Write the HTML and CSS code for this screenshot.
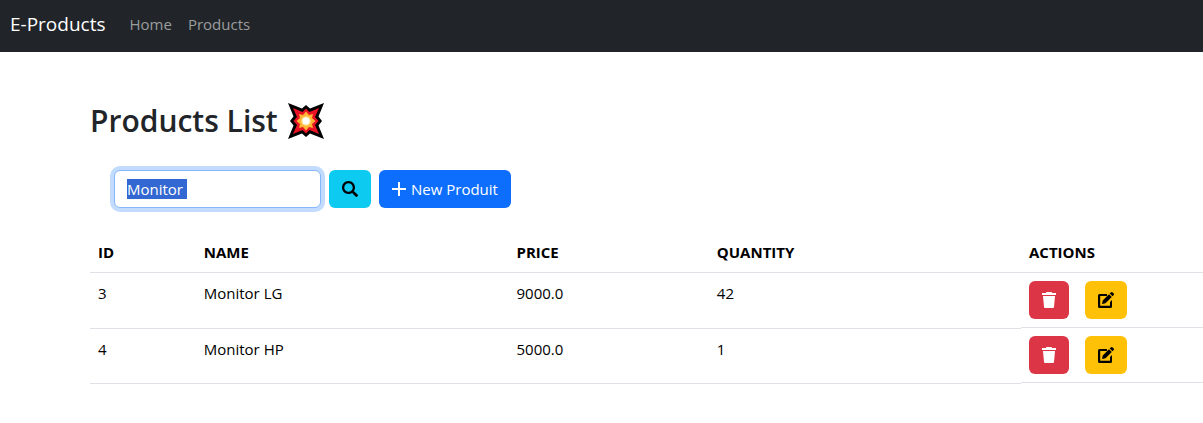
FILE: index.html
```html
<!DOCTYPE html>
<html lang="en">
<head>
<meta charset="utf-8">
<meta name="viewport" content="width=device-width, initial-scale=1">
<title>E-Products</title>
<link rel="stylesheet" href="styles.css">
</head>
<body>
<svg class="sprite" aria-hidden="true">
  <symbol id="trash" viewBox="0 0 14 16"><path d="M4.500 0h5l.6 1H14v2H0V1h3.900zM1 4h12l-1 11q-.1 1-1 1H3q-.9 0-1-1z"/></symbol>
  <symbol id="edit" viewBox="0 0 16 16"><path d="M9 2v2H2.200v9.800h9.800V10l2-2v6.500q0 1.500-1.500 1.500h-11Q0 16 0 14.500v-11Q0 2 1.500 2zM11 2.200 13.800 5 7.500 11.300 4 12l.7-3.500zM11.700 1.500l1-1q1-1 2 0l.8.8q1 1 0 2l-1 1z"/></symbol>
</svg>
<nav class="navbar">
  <a class="brand" href="#">E-Products</a>
  <a class="nav-link" href="#">Home</a>
  <a class="nav-link" href="#">Products</a>
</nav>
<main class="content">
  <h1 class="title">Products List
    <svg class="burst" viewBox="0 0 36 36" role="img" aria-label="Collision">
      <path fill="#000" d="M0 0 14 5.500 18 2 22 5.500 36 0 30.500 13.500 34 18 30.500 22.500 36 36 22 30.500 18 34 14 30.500 0 36 5.500 22.500 2 18 5.500 13.500z"/>
      <path fill="#e81224" d="M5 5 14.500 9 18 5.500 21.500 9 31 5 27 14 30.500 18 27 22 31 31 21.500 27 18 30.500 14.500 27 5 31 9 22 5.500 18 9 14z"/>
      <path fill="#ffb636" d="M11 11 15 12 18 8.500 21 12 25 11 24 15 27.500 18 24 21 25 25 21 24 18 27.500 15 24 11 25 12 21 8.500 18 12 15z"/>
      <path fill="#ffe08a" d="M18 13 21.500 14.500 23 18 21.500 21.500 18 23 14.500 21.500 13 18 14.500 14.500z"/>
      <circle fill="#fff" cx="18" cy="18" r="3.500"/>
    </svg>
  </h1>
  <form class="toolbar">
    <input class="search" id="keyword" type="text" aria-label="Search products" value="Monitor " autofocus>
    <button class="btn info" type="submit" aria-label="Search">
      <svg class="icon" viewBox="0 0 512 512"><path d="M505 442.700L405.300 343c-4.500-4.500-10.600-7-17-7H372c27.600-35.300 44-79.700 44-128C416 93.100 322.900 0 208 0S0 93.100 0 208s93.100 208 208 208c48.300 0 92.700-16.400 128-44v16.300c0 6.400 2.500 12.500 7 17l99.700 99.700c9.400 9.400 24.600 9.400 33.900 0l28.300-28.300c9.400-9.400 9.400-24.600.1-34zM208 344a136 136 0 1 1 0-272 136 136 0 0 1 0 272z"/></svg>
    </button>
    <a class="btn primary" href="#"><svg class="icon narrow" viewBox="0 0 14 14"><path d="M6 0h2v6h6v2H8v6H6V8H0V6h6z"/></svg>New Produit</a>
  </form>
  <table class="table">
    <thead>
      <tr><th class="col-id">ID</th><th class="col-name">NAME</th><th class="col-price">PRICE</th><th class="col-qty">QUANTITY</th><th>ACTIONS</th></tr>
    </thead>
    <tbody>
      <tr>
        <td>3</td><td>Monitor LG</td><td>9000.0</td><td>42</td>
        <td class="actions">
          <button class="btn danger" type="button" aria-label="Delete"><svg class="icon narrow"><use href="#trash"/></svg></button>
          <button class="btn warning" type="button" aria-label="Edit"><svg class="icon"><use href="#edit"/></svg></button>
        </td>
      </tr>
      <tr>
        <td>4</td><td>Monitor HP</td><td>5000.0</td><td>1</td>
        <td class="actions">
          <button class="btn danger" type="button" aria-label="Delete"><svg class="icon narrow"><use href="#trash"/></svg></button>
          <button class="btn warning" type="button" aria-label="Edit"><svg class="icon"><use href="#edit"/></svg></button>
        </td>
      </tr>
    </tbody>
  </table>
</main>
<script src="script.js"></script>
</body>
</html>
```
FILE: styles.css
```css
* { box-sizing: border-box; }
body {
  margin: 0;
  background: #fff;
  color: #212529;
  font: 15px/24px "Open Sans", "Noto Sans", sans-serif;
}
.sprite { display: none; }
.navbar {
  display: flex;
  align-items: center;
  gap: 16px;
  padding: 8px 10px 12px;
  background: #212529;
}
.brand {
  margin-right: 8px;
  color: #fff;
  font-size: 19px;
  line-height: 32px;
  text-decoration: none;
}
.nav-link { color: #9b9d9e; text-decoration: none; }
.content { padding: 48px 0 40px 90px; }
.title {
  display: flex;
  align-items: center;
  gap: 10px;
  margin: 0 0 28px;
  font-size: 30px;
  font-weight: 600;
  line-height: 42px;
}
.burst { width: 36px; height: 36px; }
.toolbar { display: flex; gap: 8px; margin: 0 0 24px 24px; }
.search {
  width: 207px;
  height: 38px;
  padding: 6px 12px;
  border: 1px solid #86b7fe;
  border-radius: 6px;
  outline: 0;
  box-shadow: 0 0 0 4px #c2dbfe;
  background: #fff;
  color: #212529;
  font: inherit;
}
.search::selection { background: #3367d1; color: #fff; }
.btn {
  display: inline-flex;
  align-items: center;
  gap: 5px;
  height: 38px;
  padding: 0 13px;
  border: 0;
  border-radius: 6px;
  font: inherit;
  text-decoration: none;
}
.icon { width: 16px; height: 16px; fill: currentColor; }
.narrow { width: 14px; }
.info { background: #0dcaf0; color: #000; }
.primary { background: #0d6efd; color: #fff; }
.danger { background: #dc3545; color: #fff; }
.warning { background: #ffc107; color: #000; }
.table {
  width: 100%;
  border-collapse: collapse;
  color: #000;
  table-layout: fixed;
}
.table th, .table td {
  padding: 8px;
  border: 0 solid #dee2e6;
  border-bottom-width: 1px;
  text-align: left;
  vertical-align: top;
}
.table .actions { display: flex; gap: 16px; }
.col-id { width: 9.5%; }
.col-name { width: 28.1%; }
.col-price { width: 18%; }
.col-qty { width: 28.05%; }
```
FILE: script.js
```js
const keyword = document.getElementById("keyword");
keyword.focus();
keyword.select();
```
